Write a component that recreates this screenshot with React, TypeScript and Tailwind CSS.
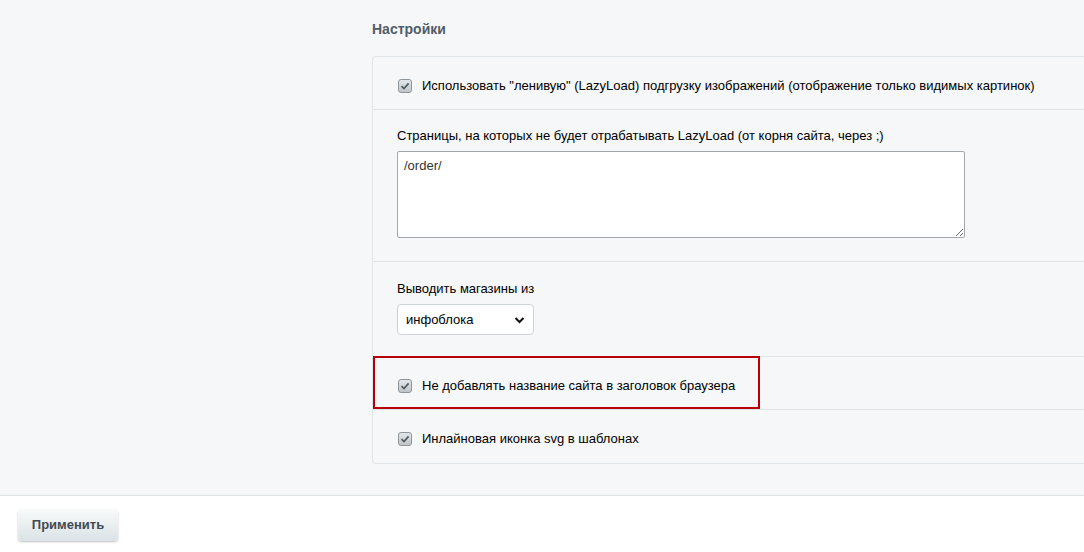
import React from 'react';

const font = { fontFamily: '"Liberation Sans", Arial, sans-serif' };

function CheckMark() {
  return (
    <span className="w-[14px] h-[14px] shrink-0 rounded-[3px] border border-[#8f969b] bg-gradient-to-b from-[#e4e7ea] to-[#bfc5c9] flex items-center justify-center">
      <svg width="10" height="10" viewBox="0 0 10 10">
        <path d="M1.5 5.2 L4 7.6 L8.6 2.4" fill="none" stroke="#535b61" strokeWidth="1.7" />
      </svg>
    </span>
  );
}

function CheckRow({ label, last }: { label: string; last?: boolean }) {
  return (
    <div className={`h-[53px] pt-[5px] flex items-center gap-[10px] pl-[25px] ${last ? '' : 'border-b border-[#e0e5e8]'}`}>
      <CheckMark />
      <span className="text-[13px] text-black">{label}</span>
    </div>
  );
}

export default function App() {
  return (
    <div className="w-[1084px] h-[552px] overflow-hidden bg-white flex flex-col" style={font}>
      {/* Settings area */}
      <div className="h-[496px] shrink-0 bg-[#f5f7f8] border-b border-[#dfe4e6] pl-[372px] pt-[19px]">
        <h2 className="text-[14px] font-bold text-[#535c69] h-[20px] leading-[20px]">Настройки</h2>
        <div className="mt-[17px] w-[760px] border border-r-0 border-[#dfe5e8] rounded-l-[4px]">
          <CheckRow label={'Использовать "ленивую" (LazyLoad) подгрузку изображений (отображение только видимых картинок)'} />

          <div className="h-[152px] border-b border-[#e0e5e8] pl-[24px] pt-[18px]">
            <div className="text-[13px] text-black leading-[16px]">
              Страницы, на которых не будет отрабатывать LazyLoad (от корня сайта, через ;)
            </div>
            <textarea
              defaultValue="/order/"
              className="mt-[7px] w-[568px] h-[87px] bg-white border border-[#a3a8ad] rounded-[2px] px-[6px] py-[4px] text-[13px] text-[#333] outline-none block"
              style={font}
            />
          </div>

          <div className="h-[95px] border-b border-[#e0e5e8] pl-[24px] pt-[19px]">
            <div className="text-[13px] text-black leading-[16px]">Выводить магазины из</div>
            <div className="mt-[7px] w-[137px] h-[31px] bg-white border border-[#cdd3d7] rounded-[4px] flex items-center justify-between pl-[8px] pr-[8px]">
              <span className="text-[13px] text-black">инфоблока</span>
              <svg width="11" height="8" viewBox="0 0 11 8">
                <path d="M1.5 2 L5.5 6 L9.5 2" fill="none" stroke="#111" strokeWidth="2" />
              </svg>
            </div>
          </div>

          <div className="relative">
            <CheckRow label="Не добавлять название сайта в заголовок браузера" />
            <div className="absolute left-0 top-[-1px] w-[387px] h-[53px] border-2 border-[#b8000a]" />
          </div>
          <CheckRow label="Инлайновая иконка svg в шаблонах" last />
        </div>
      </div>

      {/* Footer with apply button */}
      <div className="pl-[18px] pt-[13px]">
        <button className="w-[100px] h-[32px] rounded-[4px] bg-gradient-to-b from-[#f8fafa] to-[#dbe3e6] shadow-[0_1px_2px_rgba(0,0,0,0.25)] text-[13px] font-bold text-[#3f4a53]" style={font}>
          Применить
        </button>
      </div>
    </div>
  );
}
